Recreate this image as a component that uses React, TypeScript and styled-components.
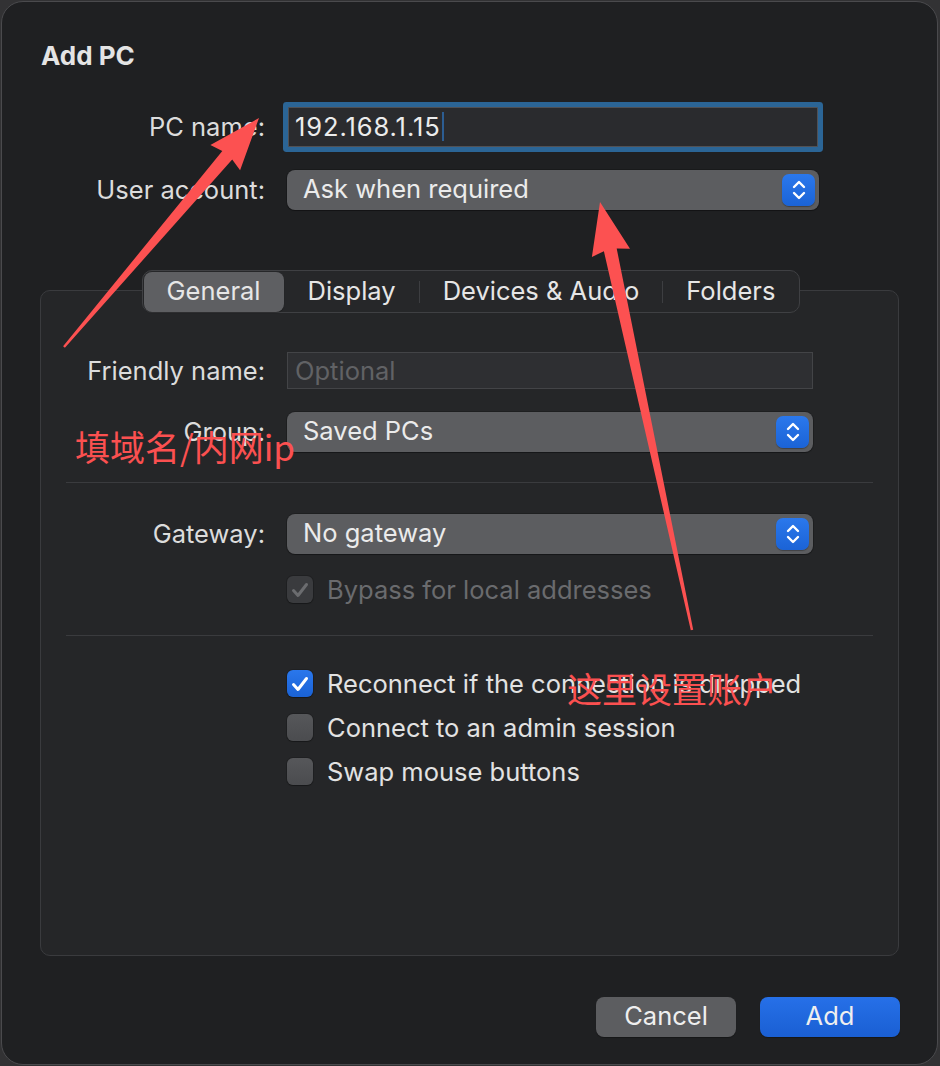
import React from "react";
import styled, { createGlobalStyle } from "styled-components";

const GlobalStyle = createGlobalStyle`
  html, body { margin: 0; padding: 0; background: #323234; }
  body {
    font-family: Inter, "Noto Sans", "Liberation Sans", sans-serif;
    -webkit-font-smoothing: antialiased;
  }
  * { box-sizing: border-box; }
`;

const Stage = styled.div`
  position: relative;
  width: 940px;
  height: 1066px;
  padding: 1px;
`;

const Window = styled.div`
  width: 937px;
  height: 1064px;
  border: 1px solid #4a4a4d;
  border-radius: 22px;
  background: #1f2022;
  display: flex;
  flex-direction: column;
  padding: 39px 38px 27px;
  color: #dedede;
  font-size: 25.5px;
`;

const Title = styled.h1`
  margin: 0;
  padding-left: 1px;
  font-size: 26px;
  line-height: 30px;
  font-weight: 700;
  color: #e4e4e4;
`;

const FormGrid = styled.div<{ $labelWidth: number; $controlWidth: number; $rowGap: number }>`
  display: grid;
  grid-template-columns: ${(p) => p.$labelWidth}px ${(p) => p.$controlWidth}px;
  column-gap: 22px;
  row-gap: ${(p) => p.$rowGap}px;
  align-items: center;
`;

const TopGrid = styled(FormGrid)`
  margin-top: 36px;
`;

const Label = styled.div`
  text-align: right;
  white-space: nowrap;
  color: #dcdcdc;
  line-height: 30px;
`;

const FocusField = styled.div`
  height: 40px;
  margin: 0 1px;
  background: #2a2b2e;
  border: 1px solid #505155;
  border-radius: 1px;
  box-shadow: 0 0 0 5px #2b6596;
  display: flex;
  align-items: center;
  padding: 0 0 1px 6px;
  color: #ececec;
  white-space: nowrap;
  letter-spacing: 0.9px;
`;

const Caret = styled.span`
  display: inline-block;
  width: 2px;
  height: 29px;
  margin-left: 1px;
  background: #2c5d92;
`;

const InputField = styled.div`
  height: 37px;
  background: #2e2f32;
  border: 1px solid #434447;
  display: flex;
  align-items: center;
  padding: 0 0 1px 7px;
  color: #616265;
`;

const Popup = styled.div`
  height: 40px;
  border-radius: 8px;
  background: #5c5d60;
  box-shadow: 0 0 0 1px rgba(0, 0, 0, 0.18), 0 1px 1px rgba(0, 0, 0, 0.25);
  display: flex;
  align-items: center;
  padding: 0 4px 0 16px;
  color: #ebebeb;
`;

const PopupText = styled.span`
  flex: 1;
  white-space: nowrap;
  padding-bottom: 3px;
`;

const Stepper = styled.span`
  width: 33px;
  height: 32px;
  border-radius: 7px;
  background: linear-gradient(#2b78ec, #1b63d6);
  box-shadow: 0 1px 1px rgba(0, 0, 0, 0.3);
  display: flex;
  align-items: center;
  justify-content: center;
`;

const TabsArea = styled.div`
  margin-top: 60px;
  flex: 1;
  display: flex;
  flex-direction: column;
  align-items: center;
`;

const Segmented = styled.div`
  position: relative;
  z-index: 1;
  height: 43px;
  margin-bottom: -23px;
  margin-left: 3px;
  border: 1px solid #3f4043;
  border-radius: 10px;
  background: #262729;
  display: flex;
  align-items: center;
  padding: 1px;
`;

const Segment = styled.div<{ $active?: boolean }>`
  height: 40px;
  padding: 0 23px 2px;
  border-radius: 8px;
  background: ${(p) => (p.$active ? "#5e5f62" : "transparent")};
  box-shadow: ${(p) => (p.$active ? "0 1px 1px rgba(0,0,0,0.3)" : "none")};
  display: flex;
  align-items: center;
  color: #e6e6e6;
  white-space: nowrap;
`;

const SegmentDivider = styled.span<{ $hidden?: boolean }>`
  width: 1px;
  height: 22px;
  flex: none;
  background: ${(p) => (p.$hidden ? "transparent" : "#3d3e41")};
`;

const Panel = styled.div`
  align-self: stretch;
  flex: 1;
  border: 1px solid #3a3b3e;
  border-radius: 10px;
  background: #252628;
  padding: 61px 25px 0 25px;
  display: flex;
  flex-direction: column;
`;

const Divider = styled.div<{ $top: number; $bottom: number }>`
  height: 1px;
  background: #3a3b3e;
  margin-top: ${(p) => p.$top}px;
  margin-bottom: ${(p) => p.$bottom}px;
`;

const CheckList = styled.div`
  margin-left: 221px;
  display: flex;
  flex-direction: column;
  gap: 17px;
`;

const CheckRow = styled.div<{ $disabled?: boolean }>`
  display: flex;
  align-items: center;
  gap: 14px;
  height: 27px;
  color: ${(p) => (p.$disabled ? "#6a6b6e" : "#e2e2e2")};
  white-space: nowrap;
`;

const Box = styled.span<{ $variant: "checked" | "unchecked" | "disabled" }>`
  width: 26px;
  height: 27px;
  flex: none;
  border-radius: 6px;
  display: flex;
  align-items: center;
  justify-content: center;
  background: ${(p) =>
    p.$variant === "checked"
      ? "linear-gradient(#2a77ec, #1a62d5)"
      : p.$variant === "disabled"
      ? "#3a3b3e"
      : "linear-gradient(#56575a, #4b4c4f)"};
  box-shadow: 0 0 0 1px rgba(0, 0, 0, 0.15), 0 1px 1px rgba(0, 0, 0, 0.25);
`;

const ButtonRow = styled.div`
  margin-top: 41px;
  margin-right: -1px;
  display: flex;
  justify-content: flex-end;
  gap: 24px;
`;

const Button = styled.button<{ $primary?: boolean }>`
  width: 140px;
  height: 40px;
  border: none;
  border-radius: 8px;
  font: inherit;
  font-size: 25.5px;
  color: #efefef;
  background: ${(p) => (p.$primary ? "linear-gradient(#2670e8, #1a5fd3)" : "#5c5d60")};
  box-shadow: 0 1px 1px rgba(0, 0, 0, 0.3);
  padding: 0 0 3px;
`;

const Overlay = styled.div`
  position: absolute;
  inset: 0;
  pointer-events: none;
  z-index: 10;
`;

const Note = styled.span<{ $size: number }>`
  position: absolute;
  font-family: "Noto Sans CJK SC", "Noto Sans", sans-serif;
  font-size: ${(p) => p.$size}px;
  line-height: 1;
  color: #fb5050;
  white-space: nowrap;
`;

function StepperIcon() {
  return (
    <svg width="16" height="22" viewBox="0 0 16 22" fill="none">
      <path d="M3 8 L8 3 L13 8" stroke="#fff" strokeWidth="2.4" strokeLinecap="round" strokeLinejoin="round" />
      <path d="M3 14 L8 19 L13 14" stroke="#fff" strokeWidth="2.4" strokeLinecap="round" strokeLinejoin="round" />
    </svg>
  );
}

function CheckMark({ color }: { color: string }) {
  return (
    <svg width="20" height="20" viewBox="0 0 20 20" fill="none">
      <path d="M3.5 10.5 L8 15.5 L16.5 4.5" stroke={color} strokeWidth="3" strokeLinecap="round" strokeLinejoin="round" />
    </svg>
  );
}

function PopupButton({ value }: { value: string }) {
  return (
    <Popup>
      <PopupText>{value}</PopupText>
      <Stepper>
        <StepperIcon />
      </Stepper>
    </Popup>
  );
}

function Checkbox({
  label,
  variant,
}: {
  label: string;
  variant: "checked" | "unchecked" | "disabled";
}) {
  return (
    <CheckRow $disabled={variant === "disabled"}>
      <Box $variant={variant}>
        {variant === "checked" && <CheckMark color="#ffffff" />}
        {variant === "disabled" && <CheckMark color="#6b6c6f" />}
      </Box>
      {label}
    </CheckRow>
  );
}

function arrowPoints(
  tx: number,
  ty: number,
  px: number,
  py: number,
  headLen = 52,
  headHalf = 19.5,
  neckHalf = 6.5,
  tailHalf = 1.2
) {
  const dx = px - tx;
  const dy = py - ty;
  const L = Math.hypot(dx, dy);
  const ux = dx / L;
  const uy = dy / L;
  const nx = -uy;
  const ny = ux;
  const at = (a: number, o: number) => `${(tx + ux * a + nx * o).toFixed(1)},${(ty + uy * a + ny * o).toFixed(1)}`;
  const base = L - headLen;
  return [
    at(0, tailHalf),
    at(base + 3, neckHalf),
    at(base, headHalf),
    at(L, 0),
    at(base, -headHalf),
    at(base + 3, -neckHalf),
    at(0, -tailHalf),
  ].join(" ");
}

const tabs = ["General", "Display", "Devices & Audio", "Folders"];
const activeTab = 0;

export default function App() {
  return (
    <>
      <GlobalStyle />
      <Stage>
        <Window>
          <Title>Add PC</Title>
          <TopGrid $labelWidth={225} $controlWidth={532} $rowGap={23}>
            <Label>PC name:</Label>
            <FocusField>
              192.168.1.15
              <Caret />
            </FocusField>
            <Label>User account:</Label>
            <PopupButton value="Ask when required" />
          </TopGrid>

          <TabsArea>
            <Segmented>
              {tabs.map((t, i) => (
                <React.Fragment key={t}>
                  {i > 0 && <SegmentDivider $hidden={i === activeTab || i - 1 === activeTab} />}
                  <Segment $active={i === activeTab}>{t}</Segment>
                </React.Fragment>
              ))}
            </Segmented>
            <Panel>
              <FormGrid $labelWidth={199} $controlWidth={526} $rowGap={23}>
                <Label>Friendly name:</Label>
                <InputField>Optional</InputField>
                <Label>Group:</Label>
                <PopupButton value="Saved PCs" />
              </FormGrid>
              <Divider $top={30} $bottom={31} />
              <FormGrid $labelWidth={199} $controlWidth={526} $rowGap={22}>
                <Label>Gateway:</Label>
                <PopupButton value="No gateway" />
                <span />
                <Checkbox label="Bypass for local addresses" variant="disabled" />
              </FormGrid>
              <Divider $top={32} $bottom={34} />
              <CheckList>
                <Checkbox label="Reconnect if the connection is dropped" variant="checked" />
                <Checkbox label="Connect to an admin session" variant="unchecked" />
                <Checkbox label="Swap mouse buttons" variant="unchecked" />
              </CheckList>
            </Panel>
          </TabsArea>

          <ButtonRow>
            <Button>Cancel</Button>
            <Button $primary>Add</Button>
          </ButtonRow>
        </Window>

        <Overlay>
          <svg width="940" height="1066" viewBox="0 0 940 1066">
            <polygon points={arrowPoints(64, 347, 259, 118)} fill="#fc5151" />
            <polygon points={arrowPoints(692, 630, 600, 202)} fill="#fc5151" />
          </svg>
          <Note $size={35} style={{ left: 75, top: 428 }}>
            填域名/内网ip
          </Note>
          <Note $size={35} style={{ left: 567, top: 670 }}>
            这里设置账户
          </Note>
        </Overlay>
      </Stage>
    </>
  );
}
